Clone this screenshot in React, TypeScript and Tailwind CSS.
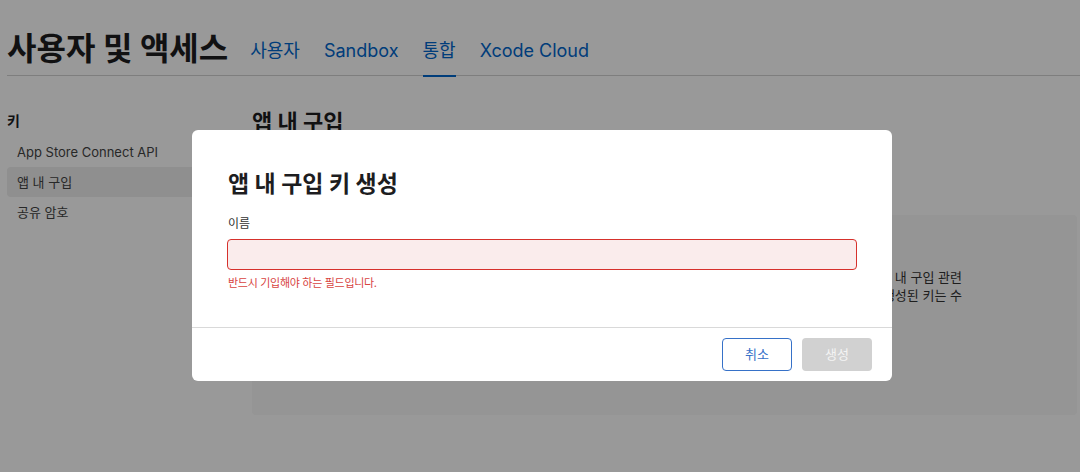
import React from "react";

const tabs = [
  { label: "사용자", active: false },
  { label: "Sandbox", active: false },
  { label: "통합", active: true },
  { label: "Xcode Cloud", active: false },
];

const sideItems = [
  { label: "App Store Connect API", active: false },
  { label: "앱 내 구입", active: true },
  { label: "공유 암호", active: false },
];

export default function App() {
  return (
    <div className="relative h-[472px] w-[1080px] overflow-hidden bg-white font-['Inter','Noto_Sans_CJK_KR',sans-serif] text-[#1d1d1f]">
      {/* Page */}
      <div className="pl-[7px]">
        <header className="flex h-[76px] items-end gap-[22px] border-b border-[#d2d2d2]">
          <h1 className="pb-[8px] text-[32px] font-bold leading-[36px]">
            사용자 및 액세스
          </h1>
          <nav className="flex items-end gap-6">
            {tabs.map((t) => (
              <a
                key={t.label}
                className={
                  t.active
                    ? "mb-[-2px] border-b-2 border-[#0066cc] pb-[12px] text-[18px] leading-[24px] text-[#0066cc]"
                    : "mb-[-2px] border-b-2 border-transparent pb-[12px] text-[18px] leading-[24px] text-[#0066cc]"
                }
              >
                {t.label}
              </a>
            ))}
          </nav>
        </header>

        <div className="flex">
          <aside className="w-[225px] shrink-0 pt-[35px]">
            <div className="text-[14px] font-semibold leading-[20px]">키</div>
            <ul className="mt-[6px] flex flex-col">
              {sideItems.map((s) => (
                <li
                  key={s.label}
                  className={
                    s.active
                      ? "h-[30px] rounded-[4px] bg-[#eeeeee] pl-[10px] text-[13px] leading-[30px] text-[#444]"
                      : "h-[30px] rounded-[4px] pl-[10px] text-[13px] leading-[30px] text-[#444]"
                  }
                >
                  {s.label}
                </li>
              ))}
            </ul>
          </aside>

          <main className="ml-[20px] flex-1 pr-[3px] pt-[32px]">
            <h2 className="text-[22px] font-bold leading-[28px]">앱 내 구입</h2>
            <section className="mt-[79px] h-[200px] rounded-[4px] bg-[#f8f8f8] px-6 pt-6">
              <h3 className="text-[17px] font-semibold leading-[22px]">앱 내 구입 키</h3>
              <div className="mt-[7px] pr-[91px] text-right text-[13px] leading-[18px] text-[#333]">
                <p className="whitespace-nowrap">
                  앱 내 구입 키를 사용하면 App Store Server API를 통해 앱 내 구입 관련
                </p>
                <p className="whitespace-nowrap">
                  정보를 확인할 수 있습니다. 키는 한 번만 다운로드할 수 있으며, 생성된 키는 수
                </p>
              </div>
            </section>
          </main>
        </div>
      </div>

      {/* Modal overlay */}
      <div className="absolute inset-0 flex items-start justify-center bg-black/40 pl-1 pt-[130px]">
        <div className="w-[700px] rounded-[6px] bg-white">
          <div className="px-[35px] pb-[37px] pt-[39px]">
            <h2 className="pl-px text-[23px] font-bold leading-[30px] text-[#1d1d1f]">
              앱 내 구입 키 생성
            </h2>
            <label className="mt-[17px] block pl-px text-[12px] leading-[16px] text-[#333]">
              이름
            </label>
            <input
              className="mt-[7px] block h-[31px] w-full rounded-[4px] border border-[#d6312c] bg-[#faecec] px-2 text-[13px] outline-none"
              aria-invalid="true"
            />
            <p className="mt-[6px] pl-px text-[11px] leading-[14px] tracking-[-0.3px] text-[#d8443f]">
              반드시 기입해야 하는 필드입니다.
            </p>
          </div>
          <div className="flex justify-end gap-[10px] border-t border-[#d9d9d9] px-[20px] py-[10px]">
            <button className="h-[33px] w-[70px] rounded-[4px] border border-[#3671c8] bg-white text-[13px] text-[#3671c8]">
              취소
            </button>
            <button
              disabled
              className="h-[33px] w-[70px] rounded-[4px] bg-[#d1d1d1] text-[13px] text-[#f4f4f4]"
            >
              생성
            </button>
          </div>
        </div>
      </div>
    </div>
  );
}
